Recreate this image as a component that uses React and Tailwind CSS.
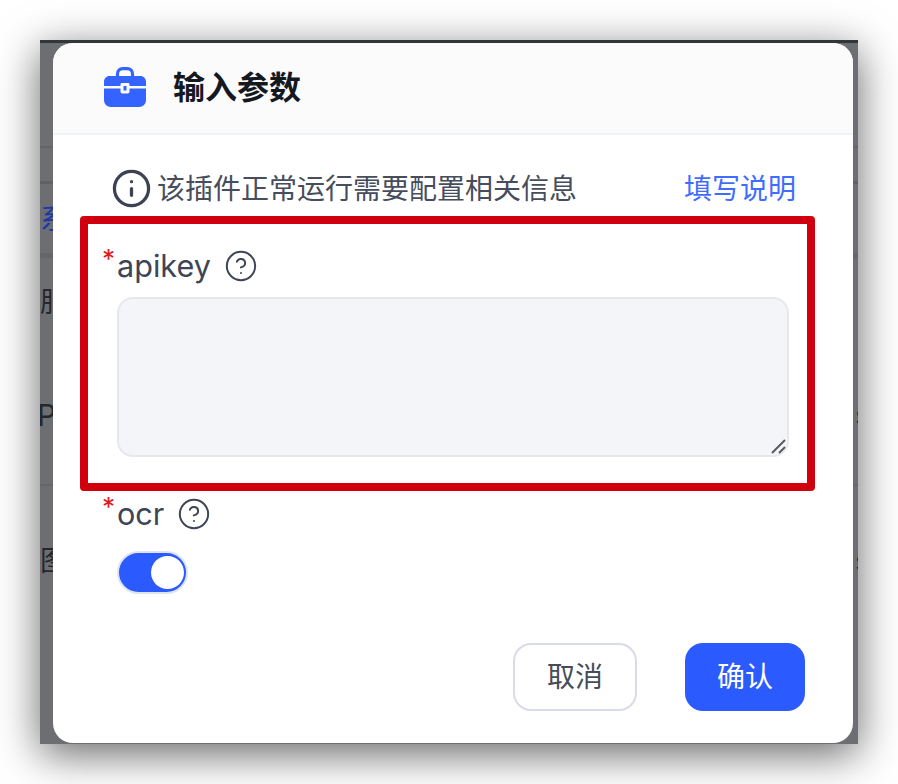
import { Info, CircleHelp } from 'lucide-react';

const FONT = "font-['Inter','Noto_Sans_CJK_SC',sans-serif]";

// Toolbox logo in the dialog title
const ToolboxIcon = () => (
  <svg className="mb-[2px]" width="42" height="40" viewBox="0 0 42 40" fill="none">
    <path d="M13.500 11V7c0-3.200 2-5.300 5.200-5.300h4.600c3.200 0 5.200 2.100 5.200 5.300v4" stroke="#3563ff" strokeWidth="3.200" />
    <path d="M5.500 9h31c3 0 5.500 2.500 5.500 5.500V19H25.500v-1.500c0-.8-.6-1.500-1.500-1.500h-6c-.9 0-1.500.7-1.500 1.500V19H0v-4.500C0 11.500 2.500 9 5.500 9Z" fill="#3563ff" />
    <path d="M0 21.500h16.500v3c0 1.300.8 2 2 2h5c1.200 0 2-.7 2-2v-3H42V33c0 4-3 7-7 7H7c-4 0-7-3-7-7V21.500Z" fill="#3563ff" />
    <rect x="19.500" y="19" width="3" height="4.500" fill="#3563ff" />
  </svg>
);

const Required = () => (
  <span className="absolute left-[-15px] top-[-4px] text-[26px] leading-[30px] text-[#e01b1b]">*</span>
);

// Page behind the dialog, mostly hidden by it
const BackgroundRow = ({ className, left, right, leftClass = '' }) => (
  <div className={`flex items-center justify-between overflow-hidden ${className}`}>
    <span className={`text-[28px] leading-none ${leftClass}`}>{left}</span>
    {right && <span className="mr-[-12px] text-[28px] leading-none text-[#1d2230]">{right}</span>}
  </div>
);

const BackgroundPage = () => (
  <div className="flex flex-col">
    <div className="h-[105px] border-b-2 border-[#62646a]" />
    <div className="h-[36px] border-b-[3px] border-[#5f6165]" />
    <BackgroundRow className="h-[74px] border-b-[5px] border-[#646669]" left="系" leftClass="text-[#1c37a8]" />
    <BackgroundRow className="h-[88px]" left="服" leftClass="text-[#25272b]" />
    <BackgroundRow className="h-[140px] border-b-2 border-[#64666a]" left="P" leftClass="ml-[-3px] text-[30px] text-[#25272b]" right="s" />
    <BackgroundRow className="h-[150px]" left="图" leftClass="text-[#25272b]" right="s" />
  </div>
);

const ConfigDialog = () => (
  <div className="absolute left-[13px] top-0 flex h-[700px] w-[800px] flex-col overflow-hidden rounded-[20px] bg-white">
    <header className="flex h-[92px] items-center border-b-2 border-[#f0f4f8] bg-[#fbfbfc] pl-[51px]">
      <ToolboxIcon />
      <h2 className="ml-[27px] text-[32px] font-semibold leading-none text-[#14181f]">输入参数</h2>
    </header>

    <div className="flex flex-1 flex-col pl-[64px] pr-[48px]">
      <div className="mt-[33px] flex items-center justify-between pr-[9px]">
        <div className="ml-[-6px] flex items-center gap-[5px] text-[28px] leading-[34px] text-[#464d5c]">
          <Info size={41} strokeWidth={1.9} className="text-[#3a4254]" />
          <span>该插件正常运行需要配置相关信息</span>
        </div>
        <a className="text-[28px] leading-[34px] text-[#3f6dff]">填写说明</a>
      </div>

      <div className="mt-[39px] flex items-center gap-[13px]">
        <label className="relative text-[30.6px] leading-[36px] text-[#3d4556]">
          <Required />
          apikey
        </label>
        <CircleHelp size={34} strokeWidth={1.4} className="text-[#3d4556]" />
      </div>
      <div className="relative mt-[13px] h-[160px] w-[672px]">
        <textarea className="block h-full w-full resize-none rounded-[16px] border-2 border-[#e6e8ee] bg-[#f4f5f9] outline-none" />
        <svg className="absolute bottom-[3px] right-[3px]" width="15" height="15" viewBox="0 0 15 15" fill="none" stroke="#55585f" strokeWidth="2">
          <path d="M1 14 14 1" />
          <path d="M8 14 14 8" />
        </svg>
      </div>

      <div className="mt-[39px] flex items-center gap-[13px]">
        <label className="relative text-[30.6px] leading-[36px] text-[#3d4556]">
          <Required />
          ocr
        </label>
        <CircleHelp size={34} strokeWidth={1.4} className="text-[#3d4556]" />
      </div>
      <div className="mt-[19px] flex h-[43px] w-[71px] items-center justify-end rounded-full border-2 border-[#dfe3ee] bg-[#2b5aff] pr-[2px]">
        <span className="h-[33px] w-[33px] rounded-full bg-white" />
      </div>

      <div className="mt-[49px] flex justify-end gap-[48px]">
        <button className="h-[68px] w-[124px] rounded-[18px] border-2 border-[#d9dce8] bg-white text-[28px] text-[#454c5a]">取消</button>
        <button className="h-[68px] w-[120px] rounded-[18px] bg-[#2b5aff] text-[28px] text-white">确认</button>
      </div>
    </div>
  </div>
);

export default function App() {
  return (
    <div className={`h-[784px] w-[898px] overflow-hidden bg-white pl-[40px] pt-[40px] ${FONT}`}>
      <div className="relative h-[704px] w-[818px] overflow-hidden border-t-[3px] border-[#333638] bg-[#6c6e72] shadow-[0_10px_40px_rgba(0,0,0,0.6)]">
        <BackgroundPage />
        <ConfigDialog />
        {/* Red annotation frame drawn over the screenshot */}
        <div className="absolute left-[40px] top-[173px] h-[275px] w-[735px] rounded-[4px] border-[8px] border-[#d0000f]" />
      </div>
    </div>
  );
}
